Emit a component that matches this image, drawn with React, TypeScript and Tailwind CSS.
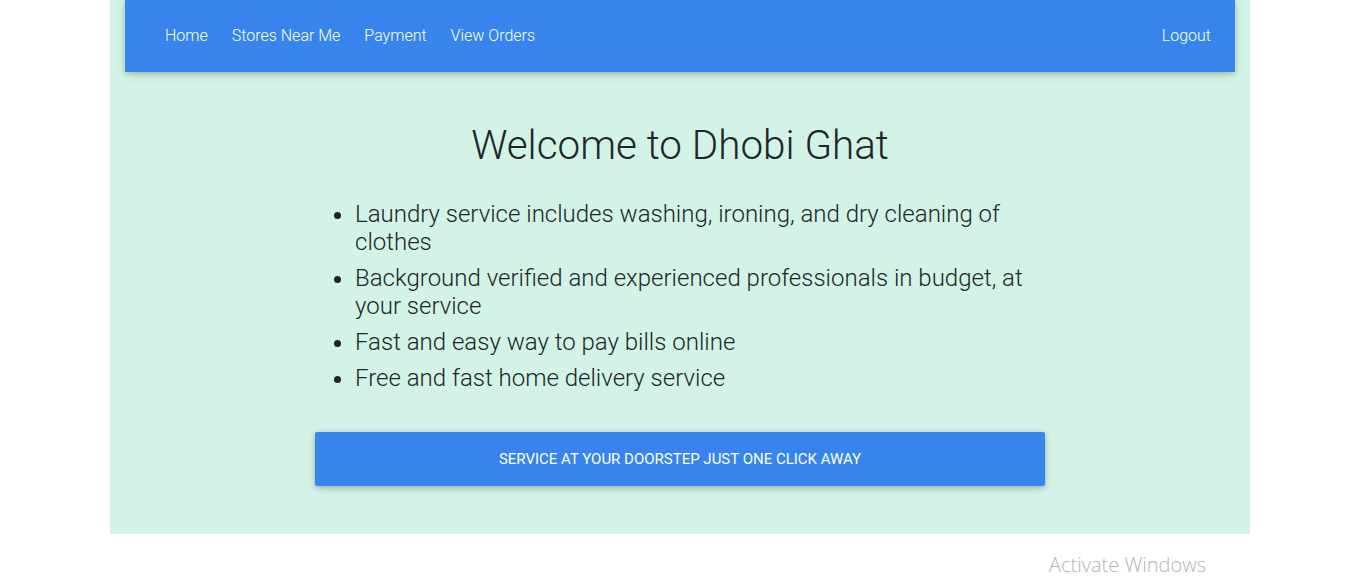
import React from 'react';

const links = ['Home', 'Stores Near Me', 'Payment', 'View Orders'];

const features = [
  'Laundry service includes washing, ironing, and dry cleaning of clothes',
  'Background verified and experienced professionals in budget, at your service',
  'Fast and easy way to pay bills online',
  'Free and fast home delivery service'
];

const App: React.FC = () => {
  return (
    <div className="relative min-h-screen bg-white" style={{ fontFamily: 'Roboto, "Liberation Sans", sans-serif' }}>
      <div className="mx-auto h-[534px] w-[1140px] bg-[#d2f3e5]">
        <nav className="mx-[15px] flex h-[72px] items-center justify-between bg-[#3684ec] pl-7 pr-3 shadow-[0_2px_5px_0_rgba(0,0,0,0.16),0_2px_10px_0_rgba(0,0,0,0.12)]">
          <ul className="flex">
            {links.map((l) => (
              <li key={l}>
                <a className="block px-3 text-[16px] font-light text-white">{l}</a>
              </li>
            ))}
          </ul>
          <a className="block px-3 text-[16px] font-light text-white">Logout</a>
        </nav>

        <h1 className="mt-[50px] text-center text-[40.4px] font-light leading-[48px] text-[#212529]">
          Welcome to Dhobi Ghat
        </h1>

        <div className="mx-auto mt-[30px] w-[730px]">
          <ul className="list-disc pl-10 text-[24px] font-light leading-[28px] text-[#212529]">
            {features.map((f) => (
              <li key={f} className="mb-2">{f}</li>
            ))}
          </ul>
          <button className="mt-[40px] flex h-[54px] w-full items-center justify-center rounded-[2px] bg-[#3684ec] text-[15px] font-normal uppercase text-white shadow-[0_2px_5px_0_rgba(0,0,0,0.16),0_2px_10px_0_rgba(0,0,0,0.12)]">
            Service at your doorstep just one click away
          </button>
        </div>
      </div>

      <div
        className="absolute left-[1049px] top-[550px] text-[20px] font-light text-[#b4b4b4]"
        style={{ fontFamily: '"Open Sans", "Liberation Sans", sans-serif' }}
      >
        Activate Windows
      </div>
    </div>
  );
};

export default App;
